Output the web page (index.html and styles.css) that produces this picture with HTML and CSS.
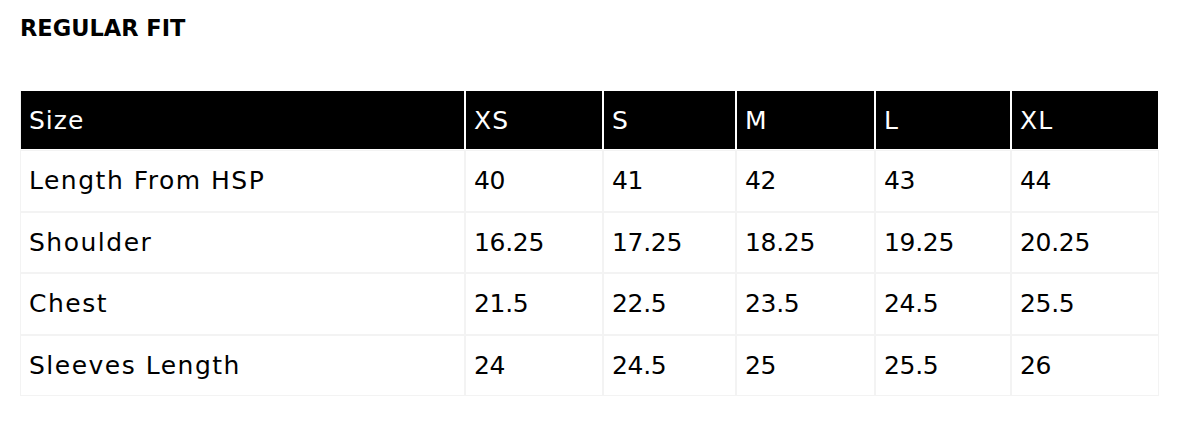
FILE: index.html
```html
<!DOCTYPE html>
<html>
<head>
<meta charset="utf-8">
<link rel="stylesheet" href="styles.css">
</head>
<body>
<div class="page">
  <h2 class="title">REGULAR FIT</h2>
  <table class="size-table">
    <colgroup>
      <col class="c-label">
      <col class="c-xs">
      <col class="c-s">
      <col class="c-m">
      <col class="c-l">
      <col class="c-xl">
    </colgroup>
    <thead>
      <tr><th>Size</th><th>XS</th><th>S</th><th>M</th><th>L</th><th>XL</th></tr>
    </thead>
    <tbody>
      <tr><td class="label">Length From HSP</td><td>40</td><td>41</td><td>42</td><td>43</td><td>44</td></tr>
      <tr><td class="label">Shoulder</td><td>16.25</td><td>17.25</td><td>18.25</td><td>19.25</td><td>20.25</td></tr>
      <tr><td class="label">Chest</td><td>21.5</td><td>22.5</td><td>23.5</td><td>24.5</td><td>25.5</td></tr>
      <tr><td class="label">Sleeves Length</td><td>24</td><td>24.5</td><td>25</td><td>25.5</td><td>26</td></tr>
    </tbody>
  </table>
</div>
</body>
</html>
```

FILE: styles.css
```css
html, body {
  margin: 0;
  padding: 0;
  background: #ffffff;
}

body {
  font-family: "DejaVu Sans", "Liberation Sans", sans-serif;
  color: #000000;
}

.page {
  padding: 14px 0 0 20px;
}

.title {
  margin: 0;
  font-size: 22.5px;
  line-height: 28px;
  font-weight: 700;
  color: #000;
}

.size-table {
  margin-top: 48px;
  width: 1139px;
  table-layout: fixed;
  border-collapse: separate;
  border-spacing: 0;
  font-size: 25px;
}

.c-label { width: 445px; }
.c-xs { width: 138px; }
.c-s { width: 133px; }
.c-m { width: 139px; }
.c-l { width: 136px; }
.c-xl { width: 148px; }

.size-table th {
  background: #000000;
  color: #ffffff;
  font-weight: 400;
  text-align: left;
  height: 58px;
  padding: 0 8px;
  border: 1px solid #ffffff;
  letter-spacing: 1px;
  vertical-align: middle;
}

.size-table thead th:first-child {
  border-left-color: #f2f2f2;
}

.size-table td {
  height: 59.5px;
  padding: 0 8px;
  border: 1px solid #f3f3f3;
  vertical-align: middle;
  white-space: nowrap;
  letter-spacing: -0.3px;
}

.size-table td.label {
  letter-spacing: 1.5px;
}
```
